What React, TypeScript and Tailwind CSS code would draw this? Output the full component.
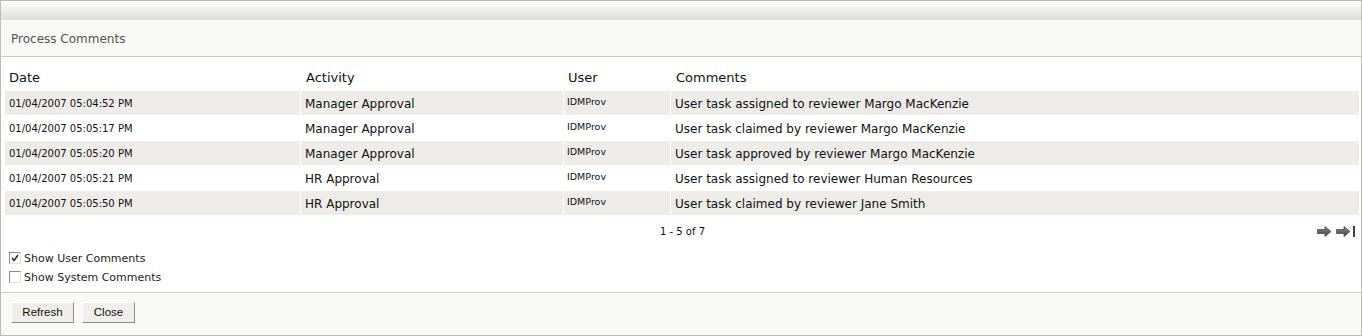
import React from "react";

const rows = [
  ["01/04/2007 05:04:52 PM", "Manager Approval", "IDMProv", "User task assigned to reviewer Margo MacKenzie"],
  ["01/04/2007 05:05:17 PM", "Manager Approval", "IDMProv", "User task claimed by reviewer Margo MacKenzie"],
  ["01/04/2007 05:05:20 PM", "Manager Approval", "IDMProv", "User task approved by reviewer Margo MacKenzie"],
  ["01/04/2007 05:05:21 PM", "HR Approval", "IDMProv", "User task assigned to reviewer Human Resources"],
  ["01/04/2007 05:05:50 PM", "HR Approval", "IDMProv", "User task claimed by reviewer Jane Smith"],
];

function Arrow({ last }: { last?: boolean }) {
  return (
    <svg width={last ? 20 : 15} height="11" viewBox={last ? "0 0 20 11" : "0 0 15 11"}>
      <defs>
        <linearGradient id={last ? "ga2" : "ga1"} x1="0" y1="0" x2="0" y2="1">
          <stop offset="0" stopColor="#8a8d88" />
          <stop offset="1" stopColor="#3f423e" />
        </linearGradient>
      </defs>
      <path d="M0.5 3.5 H8 V0.5 L14 5.5 L8 10.5 V7.5 H0.5 Z" fill={`url(#${last ? "ga2" : "ga1"})`} stroke="#4a4d48" strokeWidth="0.8" />
      {last && <rect x="17" y="0" width="2" height="11" fill="#3f423e" />}
    </svg>
  );
}

function Check({ checked }: { checked?: boolean }) {
  return (
    <span className="inline-flex items-center justify-center w-[12px] h-[12px] border-t border-l border-[#8a8a8a] border-b border-r border-b-[#e0e0e0] border-r-[#e0e0e0] bg-white">
      {checked && (
        <svg width="8" height="8" viewBox="0 0 8 8">
          <path d="M1 4 L3 6.5 L7 1" fill="none" stroke="#222" strokeWidth="1.4" />
        </svg>
      )}
    </span>
  );
}

export default function App() {
  const ff = { fontFamily: '"DejaVu Sans", Verdana, sans-serif' };
  return (
    <div className="w-[1362px] h-[336px] bg-white border border-[#bdbdb6] flex flex-col overflow-hidden" style={ff}>
      <div className="shrink-0 h-[19px] bg-gradient-to-b from-[#ffffff] to-[#dcdcd8]" />
      <div className="shrink-0 h-[37px] bg-[#f8f8f6] border-b border-[#c8c8c6] flex items-center pl-[10px] pt-[1px] text-[12px] text-[#555]">
        Process Comments
      </div>
      <div className="shrink-0 pl-[4px] pr-[2px]">
        <div className="grid grid-cols-[296px_263px_107px_1fr] h-[34px] pt-[13px] text-[13px] leading-[16px] text-[#111]">
          <div className="pl-[4px]">Date</div>
          <div className="pl-[5px]">Activity</div>
          <div className="pl-[4px]">User</div>
          <div className="pl-[5px]">Comments</div>
        </div>
        {rows.map((r, i) => (
          <div
            key={i}
            className={`grid grid-cols-[296px_263px_107px_1fr] h-[25px] border-b border-white ${i % 2 === 0 ? "bg-[#edece8]" : "bg-white"}`}
          >
            <div className="pl-[4px] flex items-center text-[10px] text-[#111] border-r border-white">{r[0]}</div>
            <div className="pl-[4px] pt-[2px] flex items-center text-[12px] text-[#111] border-r border-white">{r[1]}</div>
            <div className="pl-[3px] pb-[2px] flex items-center text-[9.5px] text-[#111] border-r border-white">{r[2]}</div>
            <div className="pl-[4px] pt-[2px] flex items-center text-[12px] text-[#111]">{r[3]}</div>
          </div>
        ))}
        <div className="relative h-[30px] flex items-center justify-center text-[10px] text-[#111]">
          <span className="ml-[1px]">1 - 5 of 7</span>
          <div className="absolute right-[3px] top-[10px] flex items-center gap-[4px]">
            <Arrow />
            <Arrow last />
          </div>
        </div>
        <div className="flex flex-col pl-[4px] pt-[6px] gap-[7px] text-[11px] text-[#222] h-[46px]">
          <label className="flex items-center gap-[3px] h-[12px]">
            <Check checked />
            <span className="pt-[2px]">Show User Comments</span>
          </label>
          <label className="flex items-center gap-[3px] h-[12px]">
            <Check />
            <span className="pt-[2px]">Show System Comments</span>
          </label>
        </div>
      </div>
      <div className="flex-1 bg-[#f9f9f7] border-t border-[#d0d0cc] flex items-start pt-[9px] pl-[10px] gap-[8px]" style={{ fontFamily: '"Liberation Sans", Arial, sans-serif' }}>
        <button className="h-[21px] w-[63px] bg-[#efeeea] border border-t-[#ffffff] border-l-[#ffffff] border-b-[#8c8c8c] border-r-[#8c8c8c] text-[11.5px] text-[#111]">
          Refresh
        </button>
        <button className="h-[21px] w-[53px] bg-[#efeeea] border border-t-[#ffffff] border-l-[#ffffff] border-b-[#8c8c8c] border-r-[#8c8c8c] text-[11.5px] text-[#111]">
          Close
        </button>
      </div>
    </div>
  );
}
